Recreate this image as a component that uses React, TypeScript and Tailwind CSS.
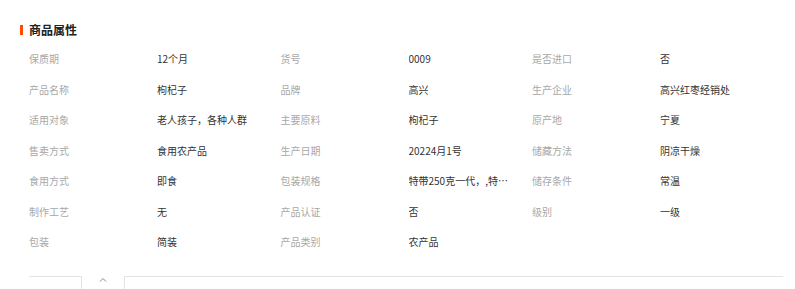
import type {FunctionComponent} from 'react';

type Attr = {label: string; value: string};

const attrs: Attr[] = [
    {label: '保质期', value: '12个月'},
    {label: '货号', value: '0009'},
    {label: '是否进口', value: '否'},
    {label: '产品名称', value: '枸杞子'},
    {label: '品牌', value: '高兴'},
    {label: '生产企业', value: '高兴红枣经销处'},
    {label: '适用对象', value: '老人孩子，各种人群'},
    {label: '主要原料', value: '枸杞子'},
    {label: '原产地', value: '宁夏'},
    {label: '售卖方式', value: '食用农产品'},
    {label: '生产日期', value: '20224月1号'},
    {label: '储藏方法', value: '阴凉干燥'},
    {label: '食用方式', value: '即食'},
    {label: '包装规格', value: '特带250克一代，,特价装250克一代'},
    {label: '储存条件', value: '常温'},
    {label: '制作工艺', value: '无'},
    {label: '产品认证', value: '否'},
    {label: '级别', value: '一级'},
    {label: '包装', value: '简装'},
    {label: '产品类别', value: '农产品'},
];

const AttrCell: FunctionComponent<Attr> = ({label, value}) => (
    <div className="flex items-center h-[30.5px]">
        <div className="w-[128px] shrink-0 text-[#a8a8a8]">{label}</div>
        <div className="w-[100px] truncate text-[#333333]">{value}</div>
    </div>
);

export default function App() {
    return (
        <div
            className="w-[795px] h-[289px] bg-white overflow-hidden"
            style={{fontFamily: '"Noto Sans CJK SC", "Noto Sans", sans-serif'}}
        >
            <div className="flex items-center pl-[20px] pt-[20px] h-[40px]">
                <span className="w-[3px] h-[10px] bg-[#ff4a00]" />
                <h2 className="ml-[6px] text-[12px] leading-[16px] font-bold text-[#222222]">
                    商品属性
                </h2>
            </div>

            <div className="grid grid-cols-[251.5px_251.5px_1fr] pl-[29px] pt-[4px] text-[10px] leading-[14px]">
                {attrs.map(attr => (
                    <AttrCell key={attr.label} {...attr} />
                ))}
            </div>

            <div className="flex mt-[18px] ml-[29px] mr-[12px] h-[20px]">
                <div className="w-[53px] border-t border-r border-[#e3e3e3]" />
                <div className="w-[42px] flex justify-center pt-[1px]">
                    <svg width="8" height="5" viewBox="0 0 8 5" fill="none">
                        <path d="M1 4.5L4 1.5L7 4.5" stroke="#8a8a8a" strokeWidth="1" />
                    </svg>
                </div>
                <div className="flex-1 border-t border-l border-[#e3e3e3]" />
            </div>
        </div>
    );
}
